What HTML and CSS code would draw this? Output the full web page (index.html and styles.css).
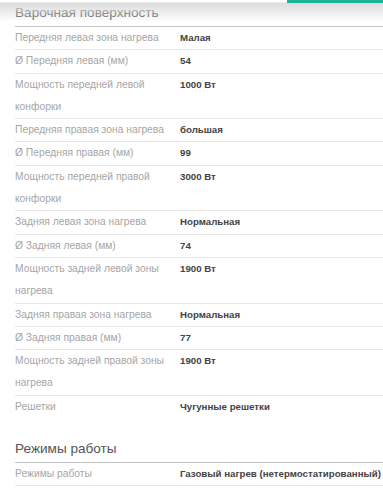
FILE: index.html
```html
<!DOCTYPE html>
<html lang="ru">
<head>
<meta charset="utf-8">
<title>Характеристики</title>
<link rel="stylesheet" href="styles.css">
</head>
<body>
<div class="topbar"><div class="tab-active"></div></div>
<div class="page">
  <section class="spec">
    <h2 class="spec-title">Варочная поверхность</h2>
    <div class="row"><div class="label">Передняя левая зона нагрева</div><div class="value">Малая</div></div>
    <div class="row"><div class="label">Ø Передняя левая (мм)</div><div class="value">54</div></div>
    <div class="row"><div class="label">Мощность передней левой конфорки</div><div class="value">1000 Вт</div></div>
    <div class="row"><div class="label">Передняя правая зона нагрева</div><div class="value">большая</div></div>
    <div class="row"><div class="label">Ø Передняя правая (мм)</div><div class="value">99</div></div>
    <div class="row"><div class="label">Мощность передней правой конфорки</div><div class="value">3000 Вт</div></div>
    <div class="row"><div class="label">Задняя левая зона нагрева</div><div class="value">Нормальная</div></div>
    <div class="row"><div class="label">Ø Задняя левая (мм)</div><div class="value">74</div></div>
    <div class="row"><div class="label">Мощность задней левой зоны нагрева</div><div class="value">1900 Вт</div></div>
    <div class="row"><div class="label">Задняя правая зона нагрева</div><div class="value">Нормальная</div></div>
    <div class="row"><div class="label">Ø Задняя правая (мм)</div><div class="value">77</div></div>
    <div class="row"><div class="label">Мощность задней правой зоны нагрева</div><div class="value">1900 Вт</div></div>
    <div class="row last"><div class="label">Решетки</div><div class="value">Чугунные решетки</div></div>
  </section>
  <section class="spec">
    <h2 class="spec-title">Режимы работы</h2>
    <div class="row"><div class="label">Режимы работы</div><div class="value">Газовый нагрев (нетермостатированный)</div></div>
  </section>
</div>
</body>
</html>
```

FILE: styles.css
```css
html, body {
  margin: 0;
  padding: 0;
  background: #ffffff;
}
body {
  font-family: "Liberation Sans", Arial, sans-serif;
  color: #444;
  overflow: hidden;
}
.topbar {
  position: absolute;
  top: 0;
  left: 0;
  right: 0;
  height: 22px;
  background: linear-gradient(to bottom, #ffffff 0, #ffffff 2px, #dcdcdc 3px, rgba(255,255,255,0) 22px);
  pointer-events: none;
}
.tab-active {
  position: absolute;
  top: 0;
  right: 0;
  width: 96px;
  height: 3px;
  background: #1cb294;
}
.page {
  padding: 3px 0 0 15px;
}
.spec + .spec {
  margin-top: 21px;
}
.spec-title {
  margin: 0;
  font-size: 13.6px;
  line-height: 20px;
  font-weight: normal;
  color: #555;
  padding-bottom: 3px;
  border-bottom: 1px solid #c4c4c4;
}
.row {
  display: grid;
  grid-template-columns: 165px 1fr;
  border-bottom: 1px solid #e8e8e8;
  font-size: 10.3px;
  line-height: 22.3px;
}
.row.last {
  border-bottom: none;
}
.label {
  color: #a6a6a6;
  padding-right: 8px;
}
.value {
  color: #444;
  font-weight: bold;
  font-size: 9.7px;
  white-space: nowrap;
}
```
